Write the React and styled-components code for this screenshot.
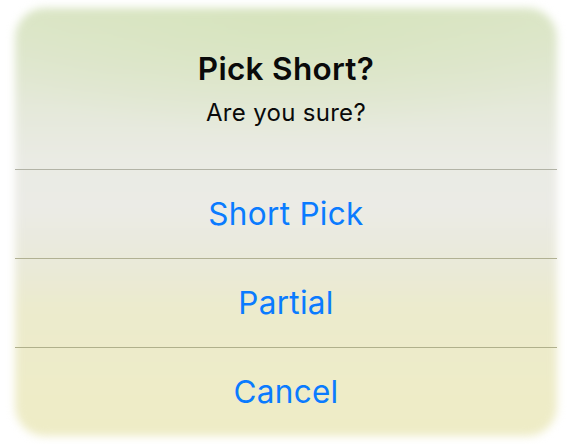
import React from "react";
import styled, { createGlobalStyle } from "styled-components";

const Global = createGlobalStyle`
  html, body { margin: 0; padding: 0; background: #ffffff; }
  body { font-family: Inter, "Noto Sans", "Liberation Sans", sans-serif; -webkit-font-smoothing: antialiased; }
`;

const Page = styled.div`
  width: 572px;
  height: 444px;
  padding: 8px 15px;
  box-sizing: border-box;
`;

const Alert = styled.div`
  position: relative;
  isolation: isolate;
  height: 428px;
  display: flex;
  flex-direction: column;
  border-radius: 30px;
  &::before {
    content: "";
    position: absolute;
    inset: 0;
    z-index: -1;
    border-radius: 30px;
    background:
      radial-gradient(ellipse 70% 30% at 50% 0%, rgba(214, 228, 188, 0.9), rgba(214, 228, 188, 0) 100%),
      linear-gradient(
        180deg,
        #dce6c8 0px,
        #e3e8d6 80px,
        #eaebe4 150px,
        #ebebe6 200px,
        #eaead8 260px,
        #ecebcd 300px,
        #eeecc8 380px,
        #eeecc6 428px
      );
    filter: blur(4px);
  }
`;

const Header = styled.div`
  height: 161px;
  box-sizing: border-box;
  padding-top: 42px;
  display: flex;
  flex-direction: column;
  align-items: center;
`;

const Title = styled.div`
  font-size: 31.5px;
  line-height: 37px;
  font-weight: 600;
  color: #0a0a0a;
  letter-spacing: 0.3px;
`;

const Message = styled.div`
  margin-top: 11px;
  font-size: 24px;
  line-height: 30px;
  font-weight: 400;
  color: #0a0a0a;
  letter-spacing: 0.3px;
`;

const Action = styled.div`
  height: 89px;
  box-sizing: border-box;
  border-top: 1px solid ${(p) => p.$line};
  display: flex;
  align-items: center;
  justify-content: center;
  font-size: 31.5px;
  font-weight: 400;
  color: #0a7bff;
  letter-spacing: 0.3px;
  padding-bottom: 2px;
`;

export default function App() {
  return (
    <>
      <Global />
      <Page>
        <Alert>
          <Header>
            <Title>Pick Short?</Title>
            <Message>Are you sure?</Message>
          </Header>
          <Action $line="#b2b3a6">Short Pick</Action>
          <Action $line="#b1b193">Partial</Action>
          <Action $line="#b0b08c">Cancel</Action>
        </Alert>
      </Page>
    </>
  );
}
